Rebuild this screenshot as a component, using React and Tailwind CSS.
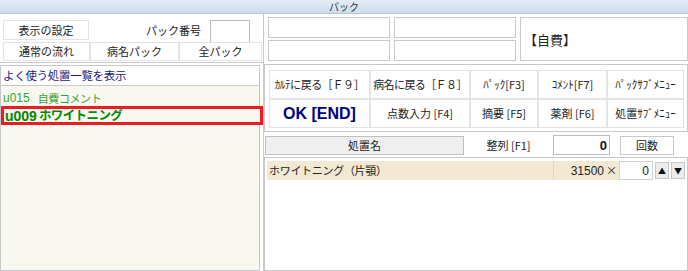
import React from 'react';

const jp = { fontFamily: '"Noto Sans CJK JP", "Noto Sans", sans-serif' };
const latin = { fontFamily: '"Liberation Sans", Arial, sans-serif' };

function Cell({ className = '', children }) {
    return (
        <div className={`flex items-center justify-center whitespace-nowrap border border-[#e3e3e3] bg-white text-[11px] text-[#222] ${className}`}>
            {children}
        </div>
    );
}

function Box({ className = '', children }) {
    return (
        <div className={`flex items-center border border-[#c9c9c9] bg-white ${className}`}>{children}</div>
    );
}

export default function App() {
    return (
        <div className="w-[688px] h-[271px] overflow-hidden bg-white flex flex-col leading-none" style={jp}>
            {/* title bar */}
            <div className="h-[14px] shrink-0 bg-gradient-to-b from-[#e4ecf6] to-[#cfdcec] border-b border-[#b8c6d8] flex items-center justify-center text-[10px] text-[#333]">
                パック
            </div>

            <div className="flex flex-1 min-h-0">
                {/* left side */}
                <div className="w-[263px] shrink-0 flex flex-col">
                    <div className="h-[49px] shrink-0 border-b border-[#c8c8c8] pt-[6px] pl-[3px] pr-[1px]">
                        <div className="flex h-[20px]">
                            <Cell className="w-[86px] h-[20px]">表示の設定</Cell>
                            <div className="w-[121px] flex items-center justify-end pr-[9px] text-[11px] text-[#222]">パック番号</div>
                            <div className="w-[40px] h-[23px] border border-[#bdbdbd] bg-white" />
                        </div>
                        <div className="grid grid-cols-[87px_89px_83px] h-[19px] mt-[2px]">
                            <Cell className="h-[19px]">通常の流れ</Cell>
                            <Cell className="h-[19px]">病名パック</Cell>
                            <Cell className="h-[19px]">全パック</Cell>
                        </div>
                    </div>

                    <div className="mt-[2px] w-[260px] h-[21px] shrink-0 border border-[#c8c8c8] bg-white flex items-center pl-[2px] text-[11.5px] tracking-[-0.3px] text-[#1c1c84]">
                        よく使う処置一覧を表示
                    </div>

                    <div className="w-[260px] flex-1 border border-t-0 border-[#c8c8c8] bg-[#f9f8f0] pt-[5px]">
                        <div className="h-[14px] flex items-center pl-[2px] text-[11px] text-[#36a236]">
                            <span style={latin} className="text-[12px]">u015</span>
                            <span className="ml-[8px] tracking-[-0.4px]">自費コメント</span>
                        </div>
                        <div className="mt-[1px] w-[262px] h-[19px] border-[3px] border-[#ec1c24] bg-[#f9f8f0] flex items-center pl-[1px] font-bold text-[#008a00]">
                            <span style={latin} className="text-[14px]">u009</span>
                            <span className="ml-[2px] text-[12.5px] tracking-[-0.6px]">ホワイトニング</span>
                        </div>
                    </div>
                </div>

                {/* right side */}
                <div className="flex-1 flex flex-col border-l border-[#c8c8c8]">
                    <div className="flex gap-[4px] pt-[3px] pl-[4px] h-[47px] shrink-0">
                        <div className="flex flex-col gap-[2px]">
                            <Box className="w-[122px] h-[21px]" />
                            <Box className="w-[122px] h-[21px]" />
                        </div>
                        <div className="flex flex-col gap-[2px]">
                            <Box className="w-[122px] h-[21px]" />
                            <Box className="w-[122px] h-[21px]" />
                        </div>
                        <Box className="w-[168px] h-[44px] pl-[3px] text-[13px] text-[#222]">【自費】</Box>
                    </div>

                    <div className="mt-[3px] w-[424px] h-[68px] border border-[#c8c8c8] pt-[5px] pl-[4px] shrink-0">
                        <div className="grid grid-cols-[101px_100px_68px_69px_77px] grid-rows-[29px_29px]">
                            <Cell className="tracking-[-0.4px]">ｶﾙﾃに戻る［Ｆ９］</Cell>
                            <Cell className="tracking-[-0.6px]">病名に戻る［Ｆ８］</Cell>
                            <Cell>ﾊﾟｯｸ[F3]</Cell>
                            <Cell>ｺﾒﾝﾄ[F7]</Cell>
                            <Cell className="text-[10.5px]">ﾊﾟｯｸｻﾌﾞﾒﾆｭｰ</Cell>
                            <Cell>
                                <span className="text-[16px] font-bold text-[#000080]" style={latin}>
                                    OK [END]
                                </span>
                            </Cell>
                            <Cell>点数入力 [F4]</Cell>
                            <Cell>摘要 [F5]</Cell>
                            <Cell>薬剤 [F6]</Cell>
                            <Cell>処置ｻﾌﾞﾒﾆｭｰ</Cell>
                        </div>
                    </div>

                    <div className="flex items-center h-[20px] mt-[3px] pl-[1px] shrink-0">
                        <div className="w-[199px] h-[19px] border border-[#c0c0c0] bg-[#efefef] flex items-center justify-center text-[11px] text-[#222]">
                            処置名
                        </div>
                        <div className="w-[89px] flex items-center justify-center text-[11px] text-[#222]">整列 [F1]</div>
                        <div className="w-[57px] h-[20px] border border-[#bdbdbd] bg-white flex items-center justify-end pr-[2px] text-[13px] font-bold text-[#111]" style={latin}>
                            0
                        </div>
                        <div className="ml-[10px] w-[54px] h-[19px] border border-[#c8c8c8] bg-white flex items-center justify-center text-[11px] text-[#222]">
                            回数
                        </div>
                    </div>

                    <div className="mt-[2px] w-[424px] flex-1 border border-[#c8c8c8] pt-[3px] pl-[2px]">
                        <div className="flex items-center h-[19px]">
                            <div className="w-[286px] h-full bg-[#f3e8d2] flex items-center pl-[2px] text-[11px] tracking-[-0.3px] text-[#222]">
                                ホワイトニング（片顎）
                            </div>
                            <div className="w-[66px] h-full bg-[#f3e8d2] border-l border-[#e0d5bf] flex items-center justify-end pr-[1px] text-[12px] text-[#222]">
                                <span style={latin}>31500</span>
                                <span className="ml-[2px] mr-[1px] text-[11px]">×</span>
                            </div>
                            <div className="w-[34px] h-full bg-white border border-[#d0d0d0] flex items-center justify-end pr-[3px] text-[12px] text-[#222]" style={latin}>
                                0
                            </div>
                            <div className="ml-[2px] w-[14px] h-[17px] bg-[#ececec] border border-[#c8c8c8] flex items-center justify-center text-[8px] text-[#111]">▲</div>
                            <div className="ml-[2px] w-[14px] h-[17px] bg-[#ececec] border border-[#c8c8c8] flex items-center justify-center text-[8px] text-[#111]">▼</div>
                        </div>
                    </div>
                </div>
            </div>
        </div>
    );
}
